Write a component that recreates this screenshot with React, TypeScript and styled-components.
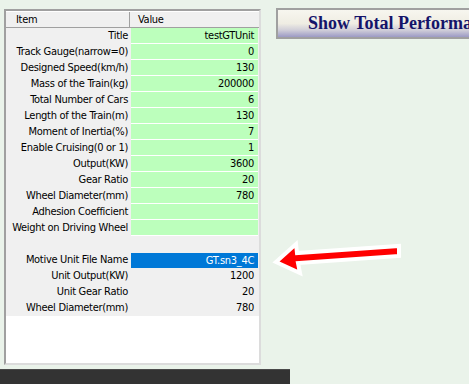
import styled, { createGlobalStyle } from "styled-components";

const GlobalStyle = createGlobalStyle`
  html, body {
    margin: 0;
    padding: 0;
    background: #eaf3ea;
    overflow: hidden;
  }
`;

const Page = styled.div`
  position: relative;
  width: 469px;
  height: 384px;
  overflow: hidden;
  font-family: "DejaVu Sans Condensed", "Liberation Sans", sans-serif;
  font-size: 11px;
  letter-spacing: -0.3px;
  color: #000;
`;

const Main = styled.div`
  display: flex;
  align-items: flex-start;
  height: 369px;
`;

const Panel = styled.div`
  margin: 9px 0 0 4px;
  width: 257px;
  height: 356px;
  box-sizing: border-box;
  background: #fff;
  border-top: 2px solid #a0a0a0;
  border-left: 2px solid #a0a0a0;
  border-right: 2px solid #dcdcdc;
  border-bottom: 2px solid #dcdcdc;
  display: flex;
  flex-direction: column;
`;

const HeaderRow = styled.div`
  display: grid;
  grid-template-columns: 124px 129px;
  height: 17px;
  box-sizing: border-box;
  border-top: 1px solid #fff;
  border-bottom: 1px solid #a0a0a0;
  background: #f0f0f0;
`;

const HeaderCell = styled.div<{ $last?: boolean }>`
  display: flex;
  align-items: center;
  padding-left: ${({ $last }) => ($last ? "8px" : "10px")};
  border-right: ${({ $last }) => ($last ? "none" : "1px solid #a0a0a0")};
  line-height: 15px;
`;

const Rows = styled.div`
  display: flex;
  flex-direction: column;
  background: #f0f0f0;
  width: 253px;
`;

const Row = styled.div`
  display: grid;
  grid-template-columns: 125px 127px;
  height: 16px;
`;

const Label = styled.div`
  text-align: right;
  padding-right: 3px;
  line-height: 16px;
  white-space: nowrap;
  overflow: hidden;
`;

const Value = styled.div<{ $kind: "green" | "gray" | "sel" }>`
  text-align: right;
  padding-right: 4px;
  line-height: 15px;
  height: 15px;
  white-space: nowrap;
  background: ${({ $kind }) =>
    $kind === "green" ? "#bcffbc" : $kind === "sel" ? "#0078d7" : "#f0f0f0"};
  color: ${({ $kind }) => ($kind === "sel" ? "#fff" : "#000")};
  border-bottom: 1px solid
    ${({ $kind }) => ($kind === "green" ? "#fff" : "#f0f0f0")};
  margin-top: ${({ $kind }) => ($kind === "sel" ? "1px" : "0")};
`;

const Side = styled.div`
  margin: 8px 0 0 15px;
`;

// the button is wider than the window, so its caption is clipped on the right
const ShowButton = styled.div`
  width: 300px;
  height: 31px;
  box-sizing: border-box;
  border: 2px solid #a0a0a0;
  background: linear-gradient(
    to bottom,
    #f7f6ef 0%,
    #efede3 50%,
    #cfcdd8 75%,
    #9c9ac4 100%
  );
  padding-left: 30px;
  display: flex;
  align-items: center;
  font-family: "Liberation Serif", serif;
  font-weight: bold;
  font-size: 18px;
  letter-spacing: 0;
  color: #14146a;
  white-space: nowrap;
`;

const BottomBar = styled.div`
  width: 290px;
  height: 15px;
  background: #333333;
  border-top: 1px solid #4a4a4a;
`;

const Arrow = styled.svg`
  position: absolute;
  left: 265px;
  top: 230px;
`;

type R = { label: string; value: string; kind: "green" | "gray" | "sel" };

const rows: R[] = [
  { label: "Title", value: "testGTUnit", kind: "green" },
  { label: "Track Gauge(narrow=0)", value: "0", kind: "green" },
  { label: "Designed Speed(km/h)", value: "130", kind: "green" },
  { label: "Mass of the Train(kg)", value: "200000", kind: "green" },
  { label: "Total Number of Cars", value: "6", kind: "green" },
  { label: "Length of the Train(m)", value: "130", kind: "green" },
  { label: "Moment of Inertia(%)", value: "7", kind: "green" },
  { label: "Enable Cruising(0 or 1)", value: "1", kind: "green" },
  { label: "Output(KW)", value: "3600", kind: "green" },
  { label: "Gear Ratio", value: "20", kind: "green" },
  { label: "Wheel Diameter(mm)", value: "780", kind: "green" },
  { label: "Adhesion Coefficient", value: "", kind: "green" },
  { label: "Weight on Driving Wheel", value: "", kind: "green" },
  { label: "", value: "", kind: "gray" },
  { label: "Motive Unit File Name", value: "GT.sn3_4C", kind: "sel" },
  { label: "Unit Output(KW)", value: "1200", kind: "gray" },
  { label: "Unit Gear Ratio", value: "20", kind: "gray" },
  { label: "Wheel Diameter(mm)", value: "780", kind: "gray" },
];

export default function App() {
  return (
    <Page>
      <GlobalStyle />
      <Main>
        <Panel>
          <HeaderRow>
            <HeaderCell>Item</HeaderCell>
            <HeaderCell $last>Value</HeaderCell>
          </HeaderRow>
          <Rows>
            {rows.map((r, i) => (
              <Row key={i}>
                <Label>{r.label}</Label>
                <Value $kind={r.kind}>{r.value}</Value>
              </Row>
            ))}
          </Rows>
        </Panel>
        <Side>
          <ShowButton>Show Total Performance</ShowButton>
        </Side>
      </Main>
      <BottomBar />
      <Arrow width="150" height="60" viewBox="0 0 150 60">
        <polygon
          points="11,32 31,14 32,23 134,16 134,26 33,33 35,43"
          fill="#ff0000"
          stroke="#ffffff"
          strokeWidth="4"
          strokeLinejoin="miter"
        />
      </Arrow>
    </Page>
  );
}
